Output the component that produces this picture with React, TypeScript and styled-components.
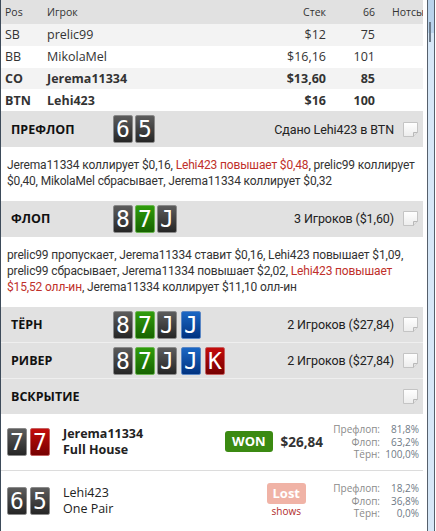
import styled, {createGlobalStyle} from "styled-components";

const GlobalStyle = createGlobalStyle`
  html, body {
    margin: 0;
    padding: 0;
    background: #ffffff;
    overflow: hidden;
  }
  body {
    font-family: "Open Sans", "Noto Sans", sans-serif;
    color: #333333;
  }
`;

const Window = styled.div`
  display: flex;
  width: 436px;
  height: 531px;
  overflow: hidden;
`;

const Panel = styled.div`
  width: 422px;
  border-left: 1px solid #3d4b5a;
  display: flex;
  flex-direction: column;
`;

const Gutter = styled.div`
  width: 4px;
  background: #ffffff;
`;

const Frame = styled.div`
  position: relative;
  width: 6px;
  border-left: 1px solid #56606c;
  border-right: 1px solid #56606c;
  background: linear-gradient(#b9d3ec 0, #b9d3ec 33px, #d6e7f7 33px);
  margin-right: 1px;
`;

const Thumb = styled.div`
  position: absolute;
  left: 1px;
  top: 22px;
  width: 2px;
  height: 20px;
  background: #6d7c8c;
`;

// player table
const TableRow = styled.div<{$head?: boolean; $alt?: boolean; $bold?: boolean}>`
  display: grid;
  grid-template-columns: 42px 1fr 66px 49px 48px;
  align-items: center;
  height: ${(p) => (p.$head ? 24 : 22)}px;
  padding-left: 4px;
  background: ${(p) => (p.$head ? "#e1e1e1" : p.$alt ? "#f3f3f3" : "#ffffff")};
  font-size: ${(p) => (p.$head ? 10.5 : 12.5)}px;
  font-weight: ${(p) => (p.$bold ? 700 : 400)};
  color: #333;
`;

const Cell = styled.div<{$right?: boolean; $pad?: number}>`
  text-align: ${(p) => (p.$right ? "right" : "left")};
  padding-left: ${(p) => p.$pad || 0}px;
  white-space: nowrap;
`;

// street headers
const Street = styled.div<{$sep?: boolean}>`
  display: flex;
  align-items: center;
  height: ${(p) => (p.$sep ? 35 : 36)}px;
  padding: 0 5px 0 10px;
  background: #e1e1e1;
  border-top: ${(p) => (p.$sep ? "1px solid #efefef" : "none")};
`;

const StreetName = styled.div`
  width: 102px;
  font-size: 12.5px;
  font-weight: 700;
  color: #111;
`;

const Board = styled.div`
  display: flex;
  gap: 2px;
`;

const Summary = styled.div`
  margin-left: auto;
  font-family: Roboto, "Open Sans", sans-serif;
  font-size: 12.5px;
  letter-spacing: -0.1px;
  color: #222;
`;

const NoteBox = styled.svg`
  margin-left: 9px;
  flex-shrink: 0;
`;

const cardColors: Record<string, [string, string, string]> = {
  x: ["#5c5c5c", "#262626", "#8a8a8a"],
  g: ["#2f9c0c", "#176300", "#6bb452"],
  b: ["#1b67c4", "#003280", "#5a86c4"],
  r: ["#c40c0c", "#760000", "#c46060"],
};

const Card = styled.div<{$suit: string; $gap?: boolean}>`
  width: 18px;
  height: 26px;
  margin-left: ${(p) => (p.$gap ? 2 : 0)}px;
  border: 1px solid ${(p) => cardColors[p.$suit][2]};
  border-radius: 2px;
  background: linear-gradient(
    ${(p) => cardColors[p.$suit][0]},
    ${(p) => cardColors[p.$suit][1]}
  );
  color: #fff;
  font-family: "DejaVu Sans Mono", "Liberation Mono", monospace;
  font-size: 23px;
  line-height: 26px;
  text-align: center;
`;

const Actions = styled.div`
  padding: 10px 6px 12px 6px;
  font-family: Roboto, "Open Sans", sans-serif;
  font-size: 12px;
  letter-spacing: -0.15px;
  line-height: 16px;
  color: #333;
  background: #fff;
  white-space: nowrap;
`;

const Hot = styled.span`
  color: #c0302a;
`;

// showdown
const Hand = styled.div<{$h: number; $line?: boolean}>`
  display: flex;
  align-items: center;
  height: ${(p) => p.$h}px;
  padding: 0 4px 0 6px;
  border-bottom: ${(p) => (p.$line ? "1px solid #dcdcdc" : "none")};
  flex-shrink: 0;
`;

const HoleCards = styled.div`
  display: flex;
  gap: 3px;
  width: 56px;
`;

const Who = styled.div<{$bold?: boolean}>`
  font-size: 12.5px;
  line-height: 16px;
  font-weight: ${(p) => (p.$bold ? 700 : 400)};
  color: #222;
`;

const Outcome = styled.div<{$right: number}>`
  margin-left: auto;
  margin-right: ${(p) => p.$right}px;
  display: flex;
  align-items: center;
  gap: 8px;
`;

const BadgeCol = styled.div`
  display: flex;
  flex-direction: column;
  align-items: center;
`;

const Badge = styled.div<{$won?: boolean}>`
  height: 21px;
  padding: 0 ${(p) => (p.$won ? 7 : 6)}px;
  border-radius: 3px;
  background: ${(p) => (p.$won ? "#3b8a12" : "#f0b3a6")};
  color: #fff;
  font-size: 13px;
  font-weight: 700;
  line-height: 21px;
`;

const Shows = styled.div`
  font-size: 10px;
  line-height: 14px;
  color: #b02a2a;
`;

const Amount = styled.div`
  font-size: 13.5px;
  font-weight: 700;
  color: #333;
`;

const Odds = styled.div`
  display: grid;
  grid-template-columns: 50px 39px;
  font-size: 10px;
  line-height: 12.5px;
  text-align: right;
  color: #8a8a8a;
`;

const OddsVal = styled.span`
  color: #6f7a86;
`;

function Note() {
  return (
    <NoteBox width="15" height="15" viewBox="0 0 15 15">
      <defs>
        <linearGradient id="ng" x1="0" y1="0" x2="0" y2="1">
          <stop offset="0" stopColor="#ffffff" />
          <stop offset="1" stopColor="#ececec" />
        </linearGradient>
      </defs>
      <path d="M0.5 0.5 H14.5 V10.5 L10.5 14.5 H0.5 Z" fill="url(#ng)" stroke="#c4c4c4" />
      <path d="M14.5 10.5 H10.5 V14.5" fill="#e2e2e2" stroke="#b8b8b8" />
    </NoteBox>
  );
}

type C = [string, string];

function Cards({list, split}: {list: C[]; split?: number}) {
  return (
    <Board>
      {list.map(([v, s], i) => (
        <Card key={i} $suit={s} $gap={split !== undefined && i >= split}>
          {v}
        </Card>
      ))}
    </Board>
  );
}

const players = [
  {pos: "SB", name: "prelic99", stack: "$12", hands: "75"},
  {pos: "BB", name: "MikolaMel", stack: "$16,16", hands: "101"},
  {pos: "CO", name: "Jerema11334", stack: "$13,60", hands: "85", bold: true},
  {pos: "BTN", name: "Lehi423", stack: "$16", hands: "100", bold: true},
];

const odds = [
  ["Префлоп:", "Флоп:", "Тёрн:"],
  ["81,8%", "63,2%", "100,0%"],
  ["18,2%", "36,8%", "0,0%"],
];

function OddsTable({vals}: {vals: string[]}) {
  return (
    <Odds>
      {odds[0].map((l, i) => [
        <span key={"l" + i}>{l}</span>,
        <OddsVal key={"v" + i}>{vals[i]}</OddsVal>,
      ])}
    </Odds>
  );
}

export default function App() {
  const flop: C[] = [["8", "x"], ["7", "g"], ["J", "x"]];
  return (
    <Window>
      <GlobalStyle />
      <Panel>
        <TableRow $head>
          <Cell>Pos</Cell>
          <Cell>Игрок</Cell>
          <Cell $right>Стек</Cell>
          <Cell $right>66</Cell>
          <Cell $pad={17}>Нотсы</Cell>
        </TableRow>
        {players.map((p, i) => (
          <TableRow key={p.pos} $alt={i % 2 === 0} $bold={p.bold}>
            <Cell>{p.pos}</Cell>
            <Cell>{p.name}</Cell>
            <Cell $right>{p.stack}</Cell>
            <Cell $right>{p.hands}</Cell>
            <Cell />
          </TableRow>
        ))}

        <Street>
          <StreetName>ПРЕФЛОП</StreetName>
          <Cards list={[["6", "x"], ["5", "x"]]} />
          <Summary>Сдано Lehi423 в BTN</Summary>
          <Note />
        </Street>
        <Actions>
          Jerema11334 коллирует $0,16, <Hot>Lehi423 повышает $0,48</Hot>, prelic99 коллирует
          <br />
          $0,40, MikolaMel сбрасывает, Jerema11334 коллирует $0,32
        </Actions>

        <Street>
          <StreetName>ФЛОП</StreetName>
          <Cards list={flop} />
          <Summary>3 Игроков ($1,60)</Summary>
          <Note />
        </Street>
        <Actions>
          prelic99 пропускает, Jerema11334 ставит $0,16, Lehi423 повышает $1,09,
          <br />
          prelic99 сбрасывает, Jerema11334 повышает $2,02, <Hot>Lehi423 повышает</Hot>
          <br />
          <Hot>$15,52 олл-ин</Hot>, Jerema11334 коллирует $11,10 олл-ин
        </Actions>

        <Street>
          <StreetName>ТЁРН</StreetName>
          <Cards list={[...flop, ["J", "b"]]} split={3} />
          <Summary>2 Игроков ($27,84)</Summary>
          <Note />
        </Street>
        <Street $sep>
          <StreetName>РИВЕР</StreetName>
          <Cards list={[...flop, ["J", "b"], ["K", "r"]]} split={3} />
          <Summary>2 Игроков ($27,84)</Summary>
          <Note />
        </Street>
        <Street $sep>
          <StreetName>ВСКРЫТИЕ</StreetName>
          <Summary />
          <Note />
        </Street>

        <Hand $h={56} $line>
          <HoleCards>
            <Card $suit="x">7</Card>
            <Card $suit="r">7</Card>
          </HoleCards>
          <div>
            <Who $bold>Jerema11334</Who>
            <Who $bold>Full House</Who>
          </div>
          <Outcome $right={7}>
            <Badge $won>WON</Badge>
            <Amount>$26,84</Amount>
          </Outcome>
          <OddsTable vals={odds[1]} />
        </Hand>
        <Hand $h={60}>
          <HoleCards>
            <Card $suit="x">6</Card>
            <Card $suit="x">5</Card>
          </HoleCards>
          <div>
            <Who>Lehi423</Who>
            <Who>One Pair</Who>
          </div>
          <Outcome $right={24}>
            <BadgeCol>
              <Badge>Lost</Badge>
              <Shows>shows</Shows>
            </BadgeCol>
          </Outcome>
          <OddsTable vals={odds[2]} />
        </Hand>
      </Panel>
      <Gutter />
      <Frame>
        <Thumb />
      </Frame>
    </Window>
  );
}
